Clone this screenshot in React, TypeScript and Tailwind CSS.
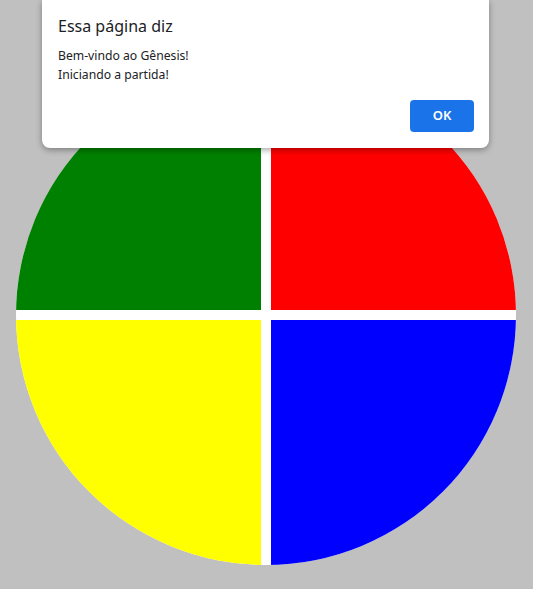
import React from 'react';

const font = { fontFamily: '"Segoe UI", "Noto Sans", "Open Sans", sans-serif' };

function Board() {
  return (
    <div className="flex pl-4 pt-[65px]">
      <div className="w-[500px] h-[500px] rounded-full overflow-hidden bg-white grid grid-cols-2 gap-[10px]">
        <div className="bg-[#008000]" />
        <div className="bg-[#ff0000]" />
        <div className="bg-[#ffff00]" />
        <div className="bg-[#0000ff]" />
      </div>
    </div>
  );
}

export default function App() {
  return (
    <div className="relative min-h-screen bg-[#c0c0c0] overflow-hidden" style={font}>
      <Board />

      {/* alert dialog */}
      <div className="absolute top-0 left-[42px] w-[447px] h-[148px] bg-white rounded-b-lg shadow-[0_2px_6px_rgba(0,0,0,0.35)]">
        <div className="pl-4 pt-[15px] text-[16px] leading-[22px] text-[#202124]">Essa página diz</div>
        <div className="pl-4 pt-[9px] text-[12.2px] leading-[19px] text-[#202124]">
          <div>Bem-vindo ao Gênesis!</div>
          <div>Iniciando a partida!</div>
        </div>
        <div className="absolute right-[15px] bottom-[16px]">
          <button className="w-[64px] h-[32px] rounded bg-[#1a73e8] text-white text-[13px] font-semibold">OK</button>
        </div>
      </div>
    </div>
  );
}
